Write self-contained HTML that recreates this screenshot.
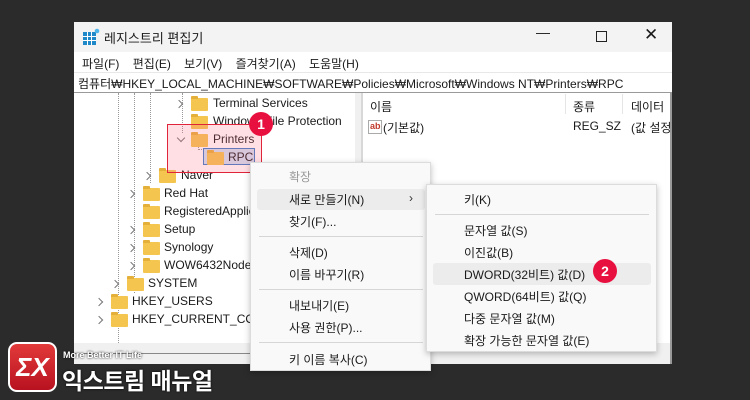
<!DOCTYPE html>
<html><head><meta charset="utf-8"><style>
*{margin:0;padding:0;box-sizing:border-box}
body{width:750px;height:400px;background:#2b2b2b;position:relative;overflow:hidden;font-family:"Liberation Sans","Noto Sans CJK KR",sans-serif;font-size:12px;color:#1a1a1a}
.a{position:absolute;white-space:nowrap}
.win{position:absolute;left:74px;top:22px;width:598px;height:342px;background:#fff;overflow:hidden}
.fold{position:absolute;width:17px;height:13px;background:#f4c64f;border-radius:1px}
.fold:before{content:"";position:absolute;left:0;top:-2px;width:7px;height:3px;background:#e5b03a;border-radius:1px 1px 0 0}
.chev{position:absolute;width:6px;height:6px;border-right:1.2px solid #777;border-bottom:1.2px solid #777;transform:rotate(-45deg)}
.chev.d{transform:rotate(45deg)}
.menu{position:absolute;background:#f9f9f9;border:1px solid #dcdcdc;box-shadow:0 2px 6px rgba(0,0,0,.25)}
.sep{position:absolute;height:1px;background:#d6d6d6}
.hl{position:absolute;background:#ececec;border-radius:3px}
.badge{position:absolute;width:24px;height:24px;border-radius:50%;background:#e8103e;color:#fff;font-weight:bold;font-size:14px;text-align:center;line-height:24px}
</style></head><body>
<div class="win">
 <div class="a" style="left:0;top:0;width:598px;height:30px;background:#f3f3f3"></div>
 <svg class="a" style="left:8px;top:6px" width="18" height="18"><rect x="1" y="4" width="13" height="13" fill="#1e88c8"/><g stroke="#fff" stroke-width="1"><line x1="1" y1="8.5" x2="14" y2="8.5"/><line x1="1" y1="12.5" x2="14" y2="12.5"/><line x1="5.5" y1="4" x2="5.5" y2="17"/><line x1="9.5" y1="4" x2="9.5" y2="17"/></g><circle cx="15" cy="3" r="2.3" fill="#4fb4e8"/></svg>
 <div class="a" style="left:30px;top:6px;font-size:13px">레지스트리 편집기</div>
 <div class="a" style="left:462px;top:2px;font-size:14px">—</div>
 <div class="a" style="left:522px;top:9px;width:11px;height:11px;border:1.3px solid #222"></div>
 <div class="a" style="left:570px;top:3px;font-size:17px;font-weight:300">✕</div>
 <div class="a" style="left:0;top:30px;width:598px;height:20px;background:#fff"></div>
 <div class="a" style="left:8px;top:33px">파일(F)&nbsp;&nbsp;&nbsp;&nbsp;편집(E)&nbsp;&nbsp;&nbsp;&nbsp;보기(V)&nbsp;&nbsp;&nbsp;&nbsp;즐겨찾기(A)&nbsp;&nbsp;&nbsp;&nbsp;도움말(H)</div>
 <div class="a" style="left:0;top:50px;width:598px;height:21px;background:#fff;border-top:1px solid #e8e8e8;border-bottom:1px solid #9a9a9a"></div>
 <div class="a" style="left:4px;top:53px">컴퓨터₩HKEY_LOCAL_MACHINE₩SOFTWARE₩Policies₩Microsoft₩Windows NT₩Printers₩RPC</div>
 <!-- tree -->
 <div class="a" style="left:0;top:321px;width:287px;height:21px;background:#f0f0f0"></div>
 <div class="a" style="left:0;top:331px;width:287px;height:1px;background:#888"></div>
 <div class="a" style="left:44px;top:71px;border-left:1px dotted #999;height:250px"></div>
 <div class="a" style="left:60px;top:71px;border-left:1px dotted #999;height:200px"></div>
 <div class="a" style="left:76px;top:71px;border-left:1px dotted #999;height:90px"></div>
 <div class="a" style="left:108px;top:71px;border-left:1px dotted #999;height:40px"></div>
 <div class="a" style="left:124px;top:118px;border-left:1px dotted #999;height:10px;width:6px;border-bottom:1px dotted #999"></div>
 <div class="chev" style="left:102px;top:79px"></div><div class="fold" style="left:117px;top:76px"></div><div class="a" style="left:139px;top:74px">Terminal Services</div>
 <div class="fold" style="left:117px;top:94px"></div><div class="a" style="left:139px;top:92px">Windows File Protection</div>
 <div class="chev d" style="left:104px;top:113px"></div><div class="fold" style="left:117px;top:112px"></div><div class="a" style="left:139px;top:110px">Printers</div>
 <div class="a" style="left:129px;top:126px;width:52px;height:17px;border:1px solid #3a7cc8;background:#cfe0f5"></div>
 <div class="fold" style="left:133px;top:130px"></div><div class="a" style="left:154px;top:128px">RPC</div>
 <div class="chev" style="left:70px;top:151px"></div><div class="fold" style="left:85px;top:148px"></div><div class="a" style="left:107px;top:146px">Naver</div>
 <div class="chev" style="left:54px;top:169px"></div><div class="fold" style="left:69px;top:166px"></div><div class="a" style="left:90px;top:164px">Red Hat</div>
 <div class="fold" style="left:69px;top:184px"></div><div class="a" style="left:90px;top:182px">RegisteredApplications</div>
 <div class="chev" style="left:54px;top:205px"></div><div class="fold" style="left:69px;top:202px"></div><div class="a" style="left:90px;top:200px">Setup</div>
 <div class="chev" style="left:54px;top:223px"></div><div class="fold" style="left:69px;top:220px"></div><div class="a" style="left:90px;top:218px">Synology</div>
 <div class="chev" style="left:54px;top:241px"></div><div class="fold" style="left:69px;top:238px"></div><div class="a" style="left:90px;top:236px">WOW6432Node</div>
 <div class="chev" style="left:38px;top:259px"></div><div class="fold" style="left:53px;top:256px"></div><div class="a" style="left:74px;top:254px">SYSTEM</div>
 <div class="chev" style="left:22px;top:277px"></div><div class="fold" style="left:37px;top:274px"></div><div class="a" style="left:58px;top:272px">HKEY_USERS</div>
 <div class="chev" style="left:22px;top:295px"></div><div class="fold" style="left:37px;top:292px"></div><div class="a" style="left:58px;top:290px">HKEY_CURRENT_CONFIG</div>
 <div class="a" style="left:281px;top:71px;width:6px;height:271px;background:#f0f0f0"></div>
 <div class="a" style="left:287px;top:71px;width:2px;height:271px;background:#d8d8d8"></div>
 <!-- right pane -->
 <div class="a" style="left:289px;top:71px;width:309px;height:271px;background:#fff"></div>
 <div class="a" style="left:491px;top:72px;width:1px;height:20px;background:#e5e5e5"></div>
 <div class="a" style="left:548px;top:72px;width:1px;height:20px;background:#e5e5e5"></div>
 <div class="a" style="left:296px;top:76px">이름</div>
 <div class="a" style="left:499px;top:76px">종류</div>
 <div class="a" style="left:557px;top:76px">데이터</div>
 <div class="a" style="left:294px;top:98px;width:14px;height:14px;border:1px solid #aaa;background:#fff;font-size:9px;color:#c0392b;font-weight:bold;line-height:11px;padding-left:1px">ab</div>
 <div class="a" style="left:309px;top:97px">(기본값)</div>
 <div class="a" style="left:499px;top:97px">REG_SZ</div>
 <div class="a" style="left:557px;top:97px">(값 설정 안 됨)</div>
 <div class="a" style="left:289px;top:321px;width:309px;height:21px;background:#f0f0f0"></div>
 <div class="a" style="left:596px;top:71px;width:2px;height:271px;background:#999"></div>
</div>
<!-- red box -->
<div class="a" style="left:167px;top:124px;width:95px;height:49px;border:1px solid #e0243a;background:rgba(255,110,130,.22)"></div>
<div class="badge" style="left:249px;top:112px">1</div>
<!-- menu 1 -->
<div class="menu" style="left:250px;top:162px;width:181px;height:209px">
 <div class="a" style="left:38px;top:5px;color:#999">확장</div>
 <div class="hl" style="left:6px;top:26px;width:168px;height:21px"></div>
 <div class="a" style="left:38px;top:28px">새로 만들기(N)</div>
 <div class="a" style="left:158px;top:28px;color:#333">›</div>
 <div class="a" style="left:38px;top:50px">찾기(F)...</div>
 <div class="sep" style="left:8px;top:73px;width:164px"></div>
 <div class="a" style="left:38px;top:81px">삭제(D)</div>
 <div class="a" style="left:38px;top:103px">이름 바꾸기(R)</div>
 <div class="sep" style="left:8px;top:126px;width:164px"></div>
 <div class="a" style="left:38px;top:134px">내보내기(E)</div>
 <div class="a" style="left:38px;top:156px">사용 권한(P)...</div>
 <div class="sep" style="left:8px;top:179px;width:164px"></div>
 <div class="a" style="left:38px;top:188px">키 이름 복사(C)</div>
</div>
<!-- submenu -->
<div class="menu" style="left:426px;top:184px;width:231px;height:168px">
 <div class="a" style="left:37px;top:6px">키(K)</div>
 <div class="sep" style="left:8px;top:29px;width:214px"></div>
 <div class="a" style="left:37px;top:37px">문자열 값(S)</div>
 <div class="a" style="left:37px;top:59px">이진값(B)</div>
 <div class="hl" style="left:6px;top:78px;width:218px;height:22px"></div>
 <div class="a" style="left:37px;top:81px">DWORD(32비트) 값(D)</div>
 <div class="a" style="left:37px;top:103px">QWORD(64비트) 값(Q)</div>
 <div class="a" style="left:37px;top:125px">다중 문자열 값(M)</div>
 <div class="a" style="left:37px;top:147px">확장 가능한 문자열 값(E)</div>
</div>
<div class="badge" style="left:593px;top:259px">2</div>
<!-- logo -->
<div class="a" style="left:8px;top:342px;width:49px;height:50px;border-radius:9px;background:#fff;padding:2px">
 <div style="width:45px;height:46px;border-radius:7px;background:linear-gradient(#e23a3a,#b81220);color:#fff;font-weight:bold;font-size:26px;text-align:center;line-height:46px;font-style:italic">ΣX</div>
</div>
<div class="a" style="left:63px;top:350px;font-size:9px;font-weight:bold;color:#fff;text-shadow:0 0 2px #000">More Better IT Life</div>
<div class="a" style="left:62px;top:362px;font-size:23px;font-weight:bold;color:#fff;letter-spacing:-0.5px;text-shadow:0 0 2px #000">익스트림 매뉴얼</div>
</body></html>
